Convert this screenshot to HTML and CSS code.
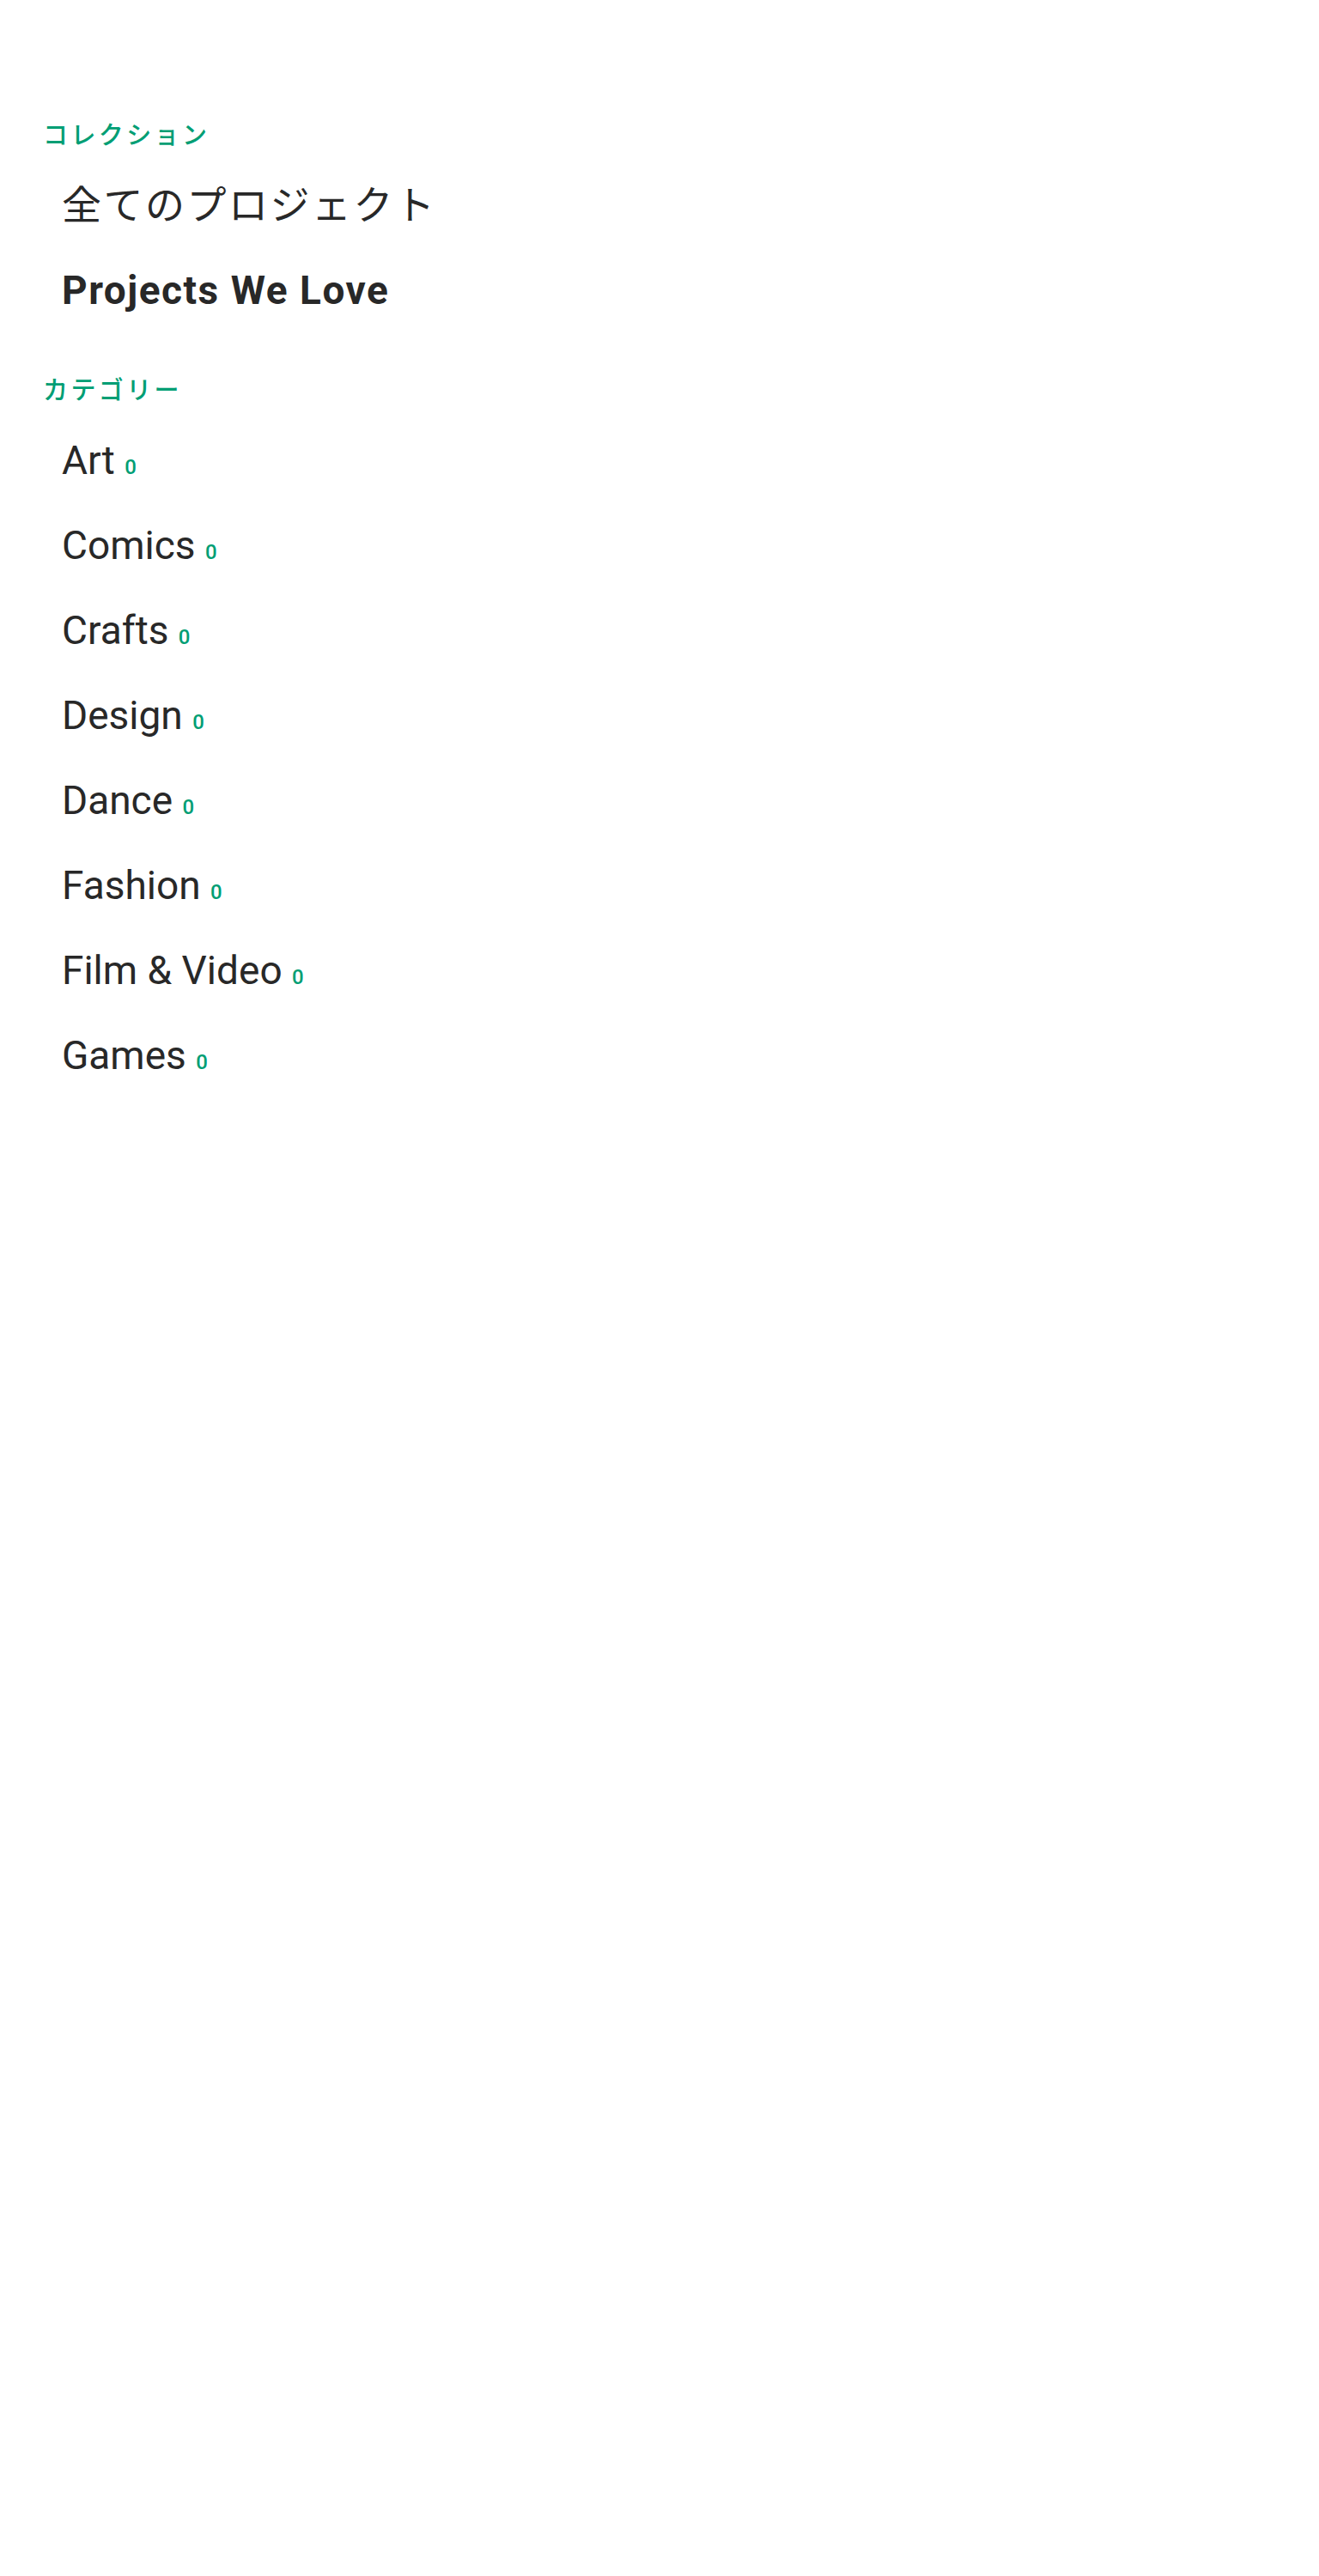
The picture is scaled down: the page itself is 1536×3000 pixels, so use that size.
FILE: index.html
```html
<!DOCTYPE html>
<html lang="ja">
<head>
<meta charset="utf-8">
<title>Categories</title>
<link rel="stylesheet" href="styles.css">
</head>
<body>
<nav class="nav">
  <section class="group">
    <h2 class="group-title">コレクション</h2>
    <ul class="list">
      <li class="item item-ja">全てのプロジェクト</li>
      <li class="item item-active">Projects We Love</li>
    </ul>
  </section>
  <section class="group">
    <h2 class="group-title">カテゴリー</h2>
    <ul class="list">
      <li class="item">Art <span class="count">0</span></li>
      <li class="item">Comics <span class="count">0</span></li>
      <li class="item">Crafts <span class="count">0</span></li>
      <li class="item">Design <span class="count">0</span></li>
      <li class="item">Dance <span class="count">0</span></li>
      <li class="item">Fashion <span class="count">0</span></li>
      <li class="item">Film &amp; Video <span class="count">0</span></li>
      <li class="item">Games <span class="count">0</span></li>
    </ul>
  </section>
</nav>
</body>
</html>
```
FILE: styles.css
```css
html, body {
  margin: 0;
  padding: 0;
  background: #ffffff;
}
body {
  font-family: Roboto, "Noto Sans CJK JP", sans-serif;
  color: #282828;
}
.nav {
  padding-top: 135px;
  padding-left: 50px;
}
.group + .group {
  margin-top: 44px;
}
.group-title {
  margin: 0 0 15px 0;
  font-size: 29px;
  line-height: 40px;
  font-weight: 500;
  letter-spacing: 3.4px;
  color: #009e74;
  font-family: "Noto Sans CJK JP", sans-serif;
}
.list {
  list-style: none;
  margin: 0;
  padding: 0 0 0 22px;
}
.item {
  font-size: 46px;
  line-height: 99px;
  height: 99px;
  font-weight: 400;
}
.item-ja {
  letter-spacing: 2.5px;
}
.item-active {
  font-weight: 700;
  letter-spacing: 1.5px;
}
.count {
  font-size: 24px;
  font-weight: 500;
  color: #009e74;
  letter-spacing: 0;
}
```
